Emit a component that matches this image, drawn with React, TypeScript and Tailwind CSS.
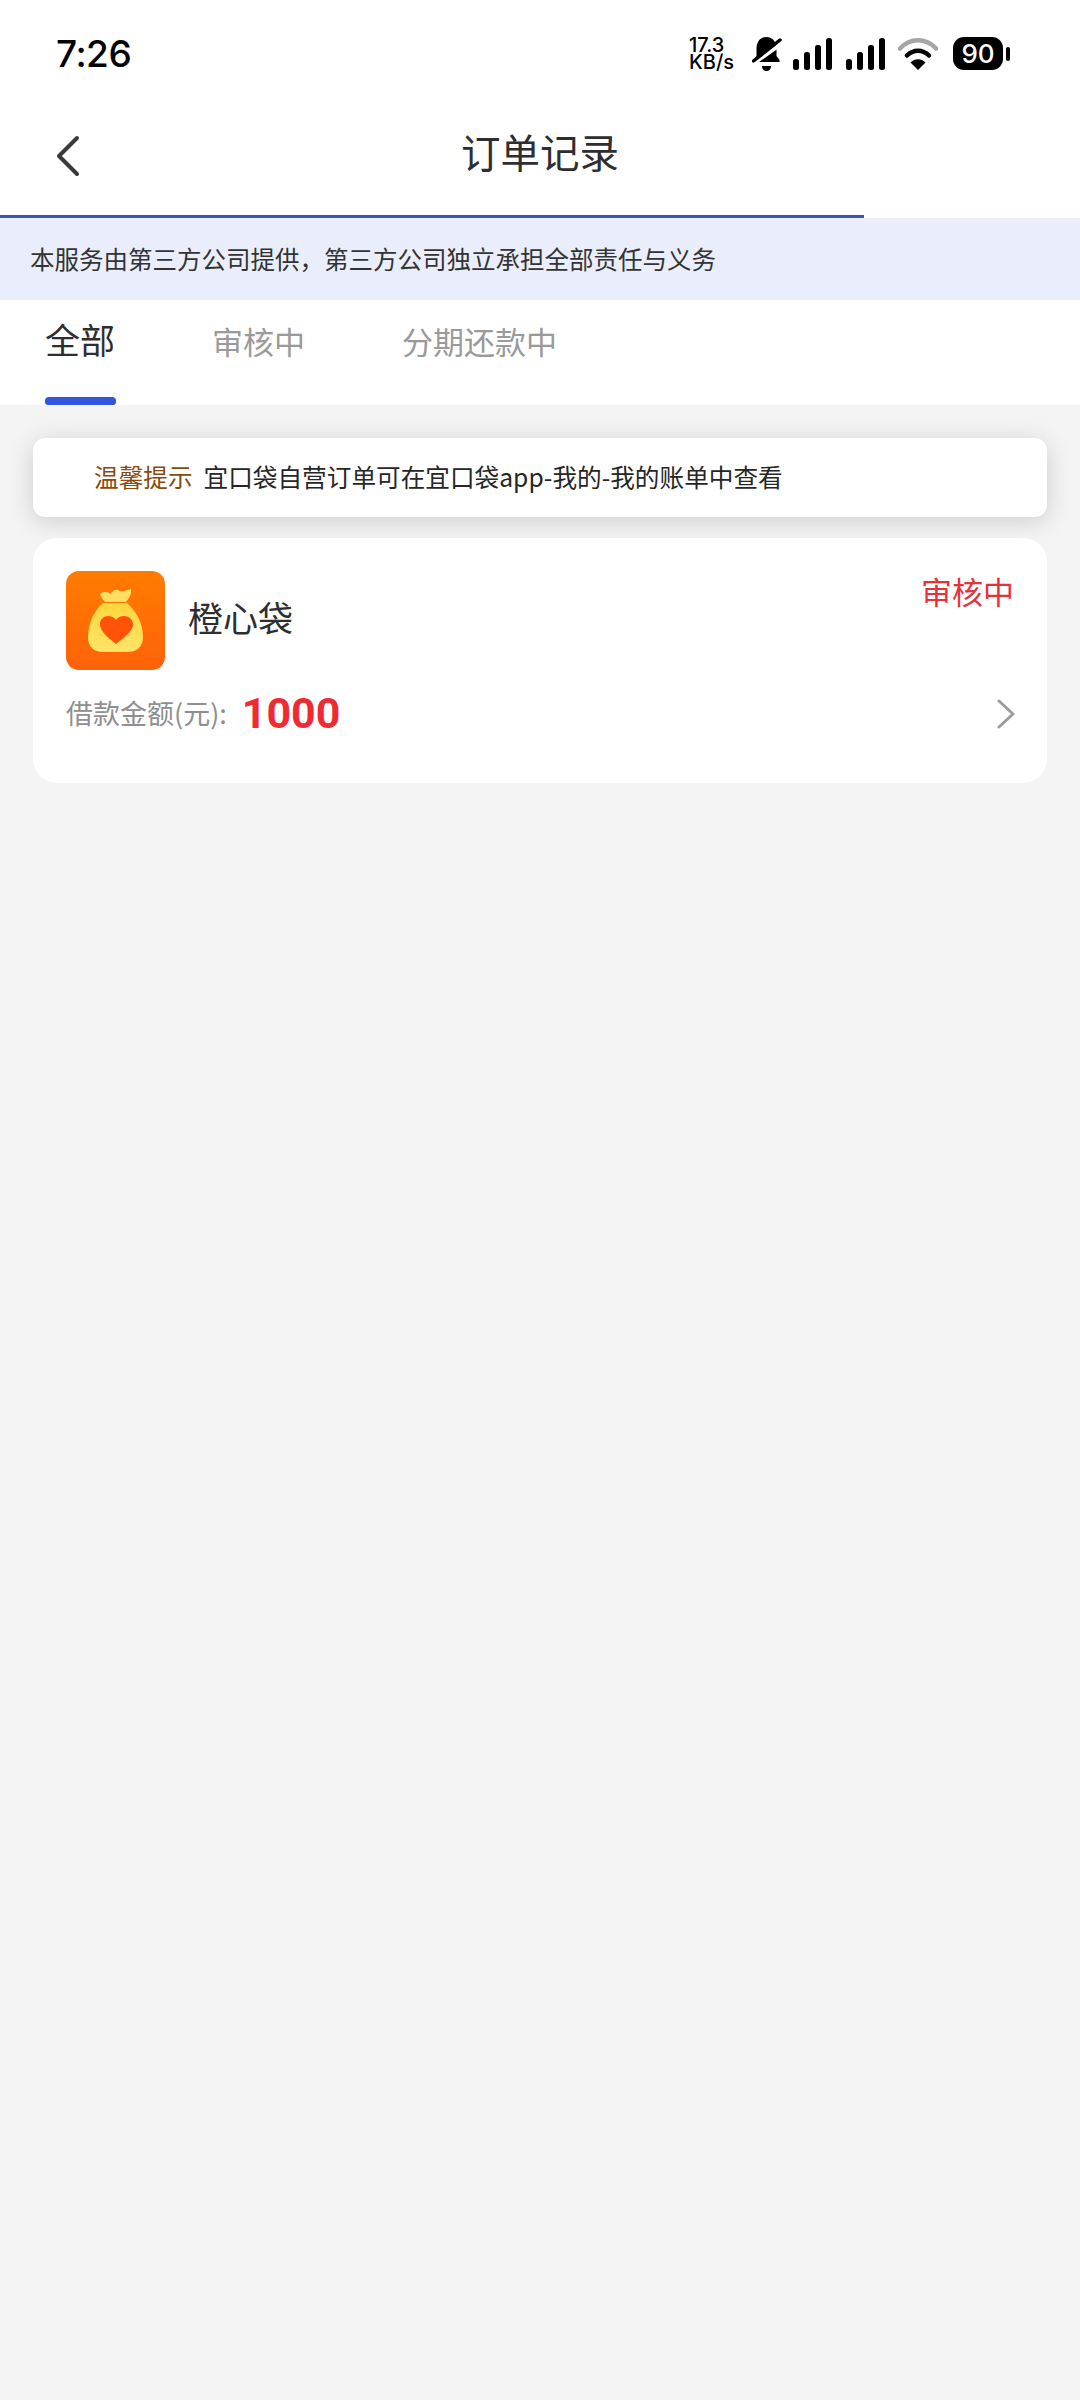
import React from 'react';

const cjk = { fontFamily: '"Noto Sans CJK SC", "Noto Sans", sans-serif' };

const SignalIcon: React.FC = () => (
	<svg width="39" height="32" viewBox="0 0 39 32" fill="#000">
		<rect x="0" y="21" width="6" height="11" rx="2.5" />
		<rect x="11" y="14" width="6" height="18" rx="2.5" />
		<rect x="22" y="7" width="6" height="25" rx="2.5" />
		<rect x="33" y="0" width="6" height="32" rx="2.5" />
	</svg>
);

const StatusBar: React.FC = () => (
	<div className="h-[100px] flex items-start justify-between pl-[56px] pr-[70px] pt-[31px] bg-white">
		<span className="text-[37px] leading-[46px] font-medium tracking-[-0.5px] text-black font-['Inter']">7:26</span>
		<div className="flex items-center pt-[6px] h-[39px]">
			<div className="w-[47px] mr-[16px] text-black font-['Inter'] font-medium text-[20px] leading-[17px] whitespace-nowrap">
				17.3
				<br />
				KB/s
			</div>
			<svg width="30" height="36" viewBox="0 0 30 36" fill="#000" className="mr-[11px]">
				<path d="M14.500 1C8 1 4.500 6 4.500 13V20L1.500 24V26H27.500V24L24.500 20V13C24.500 6 21 1 14.500 1Z" />
				<path d="M10 30H19C19 33 17 35 14.500 35C12 35 10 33 10 30Z" />
				<path d="M-2 30L32 6" stroke="#fff" strokeWidth="4" />
				<path d="M1.500 25L28 4" stroke="#000" strokeWidth="3.500" strokeLinecap="round" />
			</svg>
			<SignalIcon />
			<div className="w-[14px]" />
			<SignalIcon />
			<svg width="40" height="32" viewBox="0 0 40 32" fill="none" className="ml-[13px]">
				<path d="M2 10.500C12-0.500 28-0.500 38 10.500" stroke="#a6a6a6" strokeWidth="4.500" strokeLinecap="round" />
				<path d="M9 17.500C15.500 11 24.500 11 31 17.500" stroke="#000" strokeWidth="4.500" strokeLinecap="round" />
				<path d="M12.500 24.500C16.500 20 23.500 20 27.500 24.500L20 32z" fill="#000" />
			</svg>
			<div className="ml-[15px] w-[50px] h-[33px] rounded-[11px] bg-black text-white flex items-center justify-center font-['Inter'] font-medium text-[26px] leading-none">
				90
			</div>
			<div className="ml-[3px] w-[4px] h-[14px] rounded-full bg-black" />
		</div>
	</div>
);

const OrderIcon: React.FC = () => (
	<svg width="99" height="99" viewBox="0 0 99 99" className="shrink-0">
		<defs>
			<linearGradient id="iconBg" x1="0" y1="0" x2="0" y2="1">
				<stop offset="0" stopColor="#ff7c00" />
				<stop offset="1" stopColor="#ff620a" />
			</linearGradient>
			<linearGradient id="bagFill" x1="0" y1="0" x2="0" y2="1">
				<stop offset="0" stopColor="#ffd63f" />
				<stop offset="1" stopColor="#ffe466" />
			</linearGradient>
		</defs>
		<rect width="99" height="99" rx="13" fill="url(#iconBg)" />
		<path d="M34 23C38 20 42 21 45 23C46 20 49 18 52 19C54 22 60 19 65 18C66 23 63 27 60 31H39C37 29 35 26 34 23Z" fill="#ffdf62" />
		<path d="M37 32H61C68 38 77 50 77 66C77 76 70 81 62 81H37C28 81 22 76 22 66C22 50 30 38 37 32Z" fill="url(#bagFill)" />
		<path d="M50 73C43 67 34 61 34 53C34 48 38 45 42 45C45 45 48.500 46.500 50 49C51.500 46.500 55 45 58 45C62 45 67 48 67 53C67 61 57 67 50 73Z" fill="#ff5309" />
	</svg>
);

const App: React.FC = () => {
	return (
		<div className="w-[1080px] h-[2400px] bg-[#f4f4f5] overflow-hidden" style={cjk}>
			<StatusBar />

			{/* Title bar */}
			<div className="h-[115px] bg-white flex items-start relative pt-[29px]">
				<svg width="26" height="42" viewBox="0 0 26 42" fill="none" className="ml-[55px] mt-[6px]">
					<path d="M22 3 L4 21 L22 39" stroke="#3a3a3c" strokeWidth="4" strokeLinecap="round" strokeLinejoin="round" />
				</svg>
				<h1 className="absolute left-0 right-0 top-[26px] text-center text-[39.500px] leading-[50px] font-normal text-[#2e2e30]">
					订单记录
				</h1>
			</div>

			{/* Progress line */}
			<div className="h-[3px] bg-white">
				<div className="h-full w-[864px] bg-[#3c55b5]" />
			</div>

			<div className="h-[82px] bg-[#eaeefc] flex items-center pl-[30px] text-[24.500px] text-[#333] whitespace-nowrap">
				本服务由第三方公司提供，第三方公司独立承担全部责任与义务
			</div>

			{/* Tabs */}
			<div className="h-[105px] bg-white flex items-start pl-[44px] relative z-10">
				<div className="flex flex-col items-center h-full w-[72px] mr-[96px]">
					<span className="text-[35px] leading-[46px] mt-[16px] text-[#2e2e30]">全部</span>
					<div className="mt-auto w-[71px] h-[8px] rounded-t-[4px] rounded-b-[3px] bg-[#3355dd]" />
				</div>
				<span className="text-[31px] leading-[44px] mt-[19px] text-[#9a9a9a] mr-[97px]">审核中</span>
				<span className="text-[31px] leading-[44px] mt-[19px] text-[#9a9a9a]">分期还款中</span>
			</div>

			<div className="px-[33px] pt-[33px] flex flex-col gap-[21px]">
				{/* Notice */}
				<div className="h-[79px] bg-white rounded-[12px] shadow-[0_4px_26px_rgba(0,0,0,0.16)] flex items-center pl-[61px] pb-[2px] text-[24.650px] whitespace-nowrap relative z-10">
					<span className="text-[#8a4a0c] mr-[11px]">温馨提示</span>
					<span className="text-[#262626]">宜口袋自营订单可在宜口袋app-我的-我的账单中查看</span>
				</div>

				{/* Order card */}
				<div className="h-[245px] bg-white rounded-[24px] pt-[33px] px-[33px] relative z-20">
					<div className="flex items-start">
						<OrderIcon />
						<span className="ml-[23px] mt-[22px] text-[35px] leading-[48px] text-[#2e2e30]">橙心袋</span>
						<span className="ml-auto text-[31px] leading-[40px] text-[#e5323b]">审核中</span>
					</div>
					<div className="flex items-center mt-[13px] h-[60px]">
						<span className="text-[27px] text-[#8f8f8f]">借款金额(元):</span>
						<span className="ml-[15px] text-[43px] leading-none font-bold text-[#ee2b33] font-['Roboto']">1000</span>
						<svg width="18" height="30" viewBox="0 0 18 30" fill="none" className="ml-auto mr-[-1px] mt-[1px]">
							<path d="M2 2 L16 15 L2 28" stroke="#9c9c9c" strokeWidth="3" strokeLinecap="round" strokeLinejoin="round" />
						</svg>
					</div>
				</div>
			</div>
		</div>
	);
};

export default App;
